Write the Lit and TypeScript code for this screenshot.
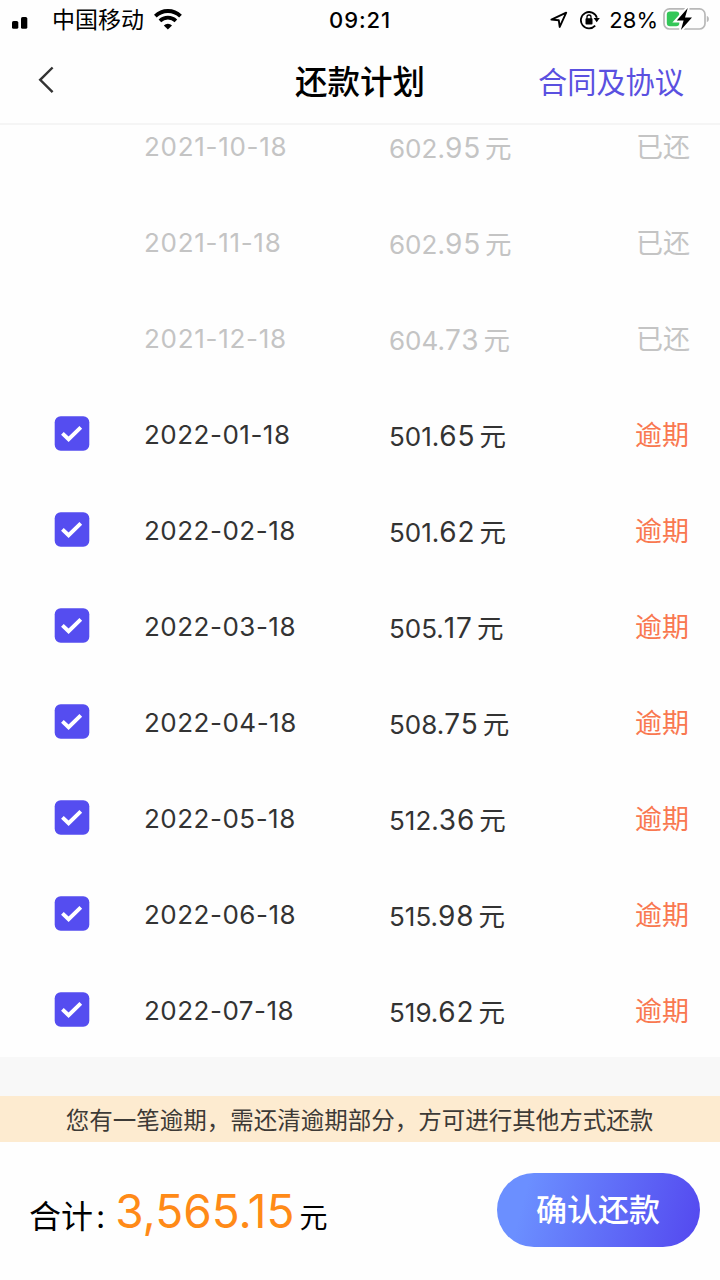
import { LitElement, html, css } from "lit";
import { customElement, property } from "lit/decorators.js";

interface Instalment {
  date: string;
  amount: string;
  overdue: boolean;
}

const INSTALMENTS: Instalment[] = [
  { date: "2021-10-18", amount: "602.95", overdue: false },
  { date: "2021-11-18", amount: "602.95", overdue: false },
  { date: "2021-12-18", amount: "604.73", overdue: false },
  { date: "2022-01-18", amount: "501.65", overdue: true },
  { date: "2022-02-18", amount: "501.62", overdue: true },
  { date: "2022-03-18", amount: "505.17", overdue: true },
  { date: "2022-04-18", amount: "508.75", overdue: true },
  { date: "2022-05-18", amount: "512.36", overdue: true },
  { date: "2022-06-18", amount: "515.98", overdue: true },
  { date: "2022-07-18", amount: "519.62", overdue: true },
];

@customElement("status-bar")
export class StatusBar extends LitElement {
  static styles = css`
    :host {
      display: grid;
      grid-template-columns: 1fr auto 1fr;
      align-items: center;
      height: 40px;
      color: #000;
    }
    svg { display: block; flex: none; }
    .left { display: flex; align-items: center; height: 40px; padding-left: 12px; }
    .carrier { font-size: 23px; line-height: 42px; margin: 0 10px 0 24px; }
    .time { font-size: 22px; font-weight: 500; letter-spacing: 0.9px; line-height: 40px; }
    .right { display: flex; align-items: center; height: 40px; justify-content: flex-end; padding-right: 10px; }
    .lock { margin: 0 9px 0 12px; }
    .percent { font-size: 22px; line-height: 40px; margin-right: 5px; }
  `;

  render() {
    return html`
      <div class="left">
        <svg width="16" height="40" viewBox="0 0 16 40">
          <rect x="0" y="21" width="6.3" height="7.8" rx="1.6" />
          <rect x="9" y="17" width="6.3" height="11.8" rx="1.6" />
        </svg>
        <span class="carrier">中国移动</span>
        <svg width="28" height="40" viewBox="0 0 28 40" fill="none" stroke="#000">
          <path d="M1.3 16.1a18 18 0 0 1 25.2 0" stroke-width="3.9" />
          <path d="M5.9 20.9a11.6 11.6 0 0 1 16 0" stroke-width="3.7" />
          <path d="M9.8 25.4a6 6 0 0 1 8.2 0l-4.1 4.1z" fill="#000" stroke="none" />
        </svg>
      </div>
      <span class="time">09:21</span>
      <div class="right">
        <svg width="18" height="40" viewBox="0 0 18 40">
          <path d="M1.4 19.6 16.2 12.7 9.7 26.9 8.8 20.3z" fill="none" stroke="#000" stroke-width="1.9" stroke-linejoin="round" />
        </svg>
        <svg class="lock" width="20" height="40" viewBox="0 0 20 40">
          <path d="M15.2 25.7A8.2 8.2 0 1 1 16.9 17.7" fill="none" stroke="#000" stroke-width="1.8" />
          <path d="M13.6 18h6.2l-3.1 4.3z" />
          <rect x="5.5" y="18.2" width="7" height="6.2" rx=".9" />
          <path d="M7 19v-2a2 2 0 0 1 4 0v2" fill="none" stroke="#000" stroke-width="1.3" />
        </svg>
        <span class="percent">28%</span>
        <svg width="47" height="40" viewBox="0 0 47 40">
          <rect x="1" y="8.9" width="41" height="20.1" rx="5.5" fill="none" stroke="#b8b8b8" stroke-width="1.7" />
          <path d="M43.8 15.7a3.6 3.6 0 0 1 0 6.6z" fill="#b8b8b8" />
          <rect x="3.8" y="11.6" width="12.5" height="14.6" rx="3.2" fill="#34c759" />
          <path d="M24.8 8 13.8 20.4h6.8L17.9 30 29 17.4h-7z" fill="#000" stroke="#fff" stroke-width="4" paint-order="stroke" />
        </svg>
      </div>
    `;
  }
}

@customElement("plan-row")
export class PlanRow extends LitElement {
  @property({ attribute: false }) item!: Instalment;

  static styles = css`
    :host { display: block; flex: none; height: 96px; }
    .row {
      display: grid;
      grid-template-columns: 90px 245px 1fr auto;
      align-items: center;
      height: 96px;
      padding: 0 30px 0 54px;
      color: #333;
    }
    .paid { color: #c4c4c4; }
    .box { display: block; margin-top: 1px; }
    .date { font-size: 26px; line-height: 32px; letter-spacing: 0.5px; padding-top: 3px; }
    .paid .date { letter-spacing: 0.7px; }
    .amount { display: flex; align-items: baseline; line-height: 40px; padding-top: 6px; }
    .whole { font-size: 26px; }
    .cents { font-size: 28px; letter-spacing: 0.9px; }
    .unit { font-size: 26.5px; margin-left: 4px; }
    .status { font-size: 27px; line-height: 40px; padding-top: 6px; }
    .overdue .status { color: #f97850; margin-right: 1px; }
  `;

  render() {
    const { date, amount, overdue } = this.item;
    const [whole, cents] = amount.split(".");
    return html`
      <div class="row ${overdue ? "overdue" : "paid"}">
        <span>
          ${overdue
            ? html`<svg class="box" width="36" height="36" viewBox="0 0 36 36">
                <rect x=".7" y=".2" width="34.6" height="34.6" rx="6" fill="#554df0" />
                <path d="m8.4 17.3 6.2 5.9 12.2-11.8" fill="none" stroke="#fff" stroke-width="3.9" />
              </svg>`
            : null}
        </span>
        <span class="date">${date}</span>
        <span class="amount"><span class="whole">${whole}.</span><span class="cents">${cents}</span><span class="unit">元</span></span>
        <span class="status">${overdue ? "逾期" : "已还"}</span>
      </div>
    `;
  }
}

@customElement("app-root")
export class AppRoot extends LitElement {
  static styles = css`
    :host {
      display: flex;
      flex-direction: column;
      height: 1280px;
      overflow: hidden;
      background: #fefefe;
      font-family: Inter, "Noto Sans CJK SC", sans-serif;
      white-space: nowrap;
    }
    .nav {
      display: grid;
      grid-template-columns: 1fr auto 1fr;
      align-items: center;
      height: 83px;
      border-bottom: 2px solid #f5f5f5;
      padding: 0 36px;
    }
    .back { display: block; margin-bottom: 3px; }
    .title { font-size: 32.5px; font-weight: 500; line-height: 48px; color: #000; padding-top: 2px; }
    .link { justify-self: end; font-size: 29.2px; line-height: 44px; color: #5a50e0; padding-top: 2px; }
    .list { flex: 1; min-height: 0; overflow: hidden; display: flex; flex-direction: column; justify-content: flex-end; }
    .gap { height: 39px; background: #f8f8f8; }
    .notice { box-sizing: border-box; height: 46px; padding: 1px 1px 0 0; line-height: 48px; background: #fdebd0; color: #3d3a36; font-size: 23.5px; text-align: center; }
    .footer { display: flex; align-items: center; justify-content: space-between; height: 138px; padding: 0 20px 0 29px; }
    .total { display: flex; align-items: baseline; color: #000; line-height: 60px; padding-top: 6px; }
    .label { font-size: 32px; }
    .colon { font-size: 32px; margin-left: 3px; }
    .sum { font-size: 46px; color: #ff8a17; margin-left: 10px; }
    .unit { font-size: 28px; margin-left: 5px; }
    .confirm {
      width: 203px;
      height: 74px;
      border: 0;
      border-radius: 37px;
      margin-bottom: 2px;
      padding: 0 1px 0 0;
      background: linear-gradient(105deg, #6b8fff 15%, #554cf0 95%);
      color: #fff;
      font: 500 31px/74px Inter, "Noto Sans CJK SC", sans-serif;
    }
  `;

  render() {
    return html`
      <status-bar></status-bar>
      <div class="nav">
        <svg class="back" width="20" height="30" viewBox="0 0 20 30">
          <path d="M16.6 2.5 4.2 14.8 16.6 27.1" fill="none" stroke="#333" stroke-width="2.4" />
        </svg>
        <span class="title">还款计划</span>
        <span class="link">合同及协议</span>
      </div>
      <div class="list">${INSTALMENTS.map((item) => html`<plan-row .item=${item}></plan-row>`)}</div>
      <div class="gap"></div>
      <div class="notice">您有一笔逾期，需还清逾期部分，方可进行其他方式还款</div>
      <div class="footer">
        <div class="total"><span class="label">合计</span><span class="colon">:</span><span class="sum">3,565.15</span><span class="unit">元</span></div>
        <button class="confirm">确认还款</button>
      </div>
    `;
  }
}
